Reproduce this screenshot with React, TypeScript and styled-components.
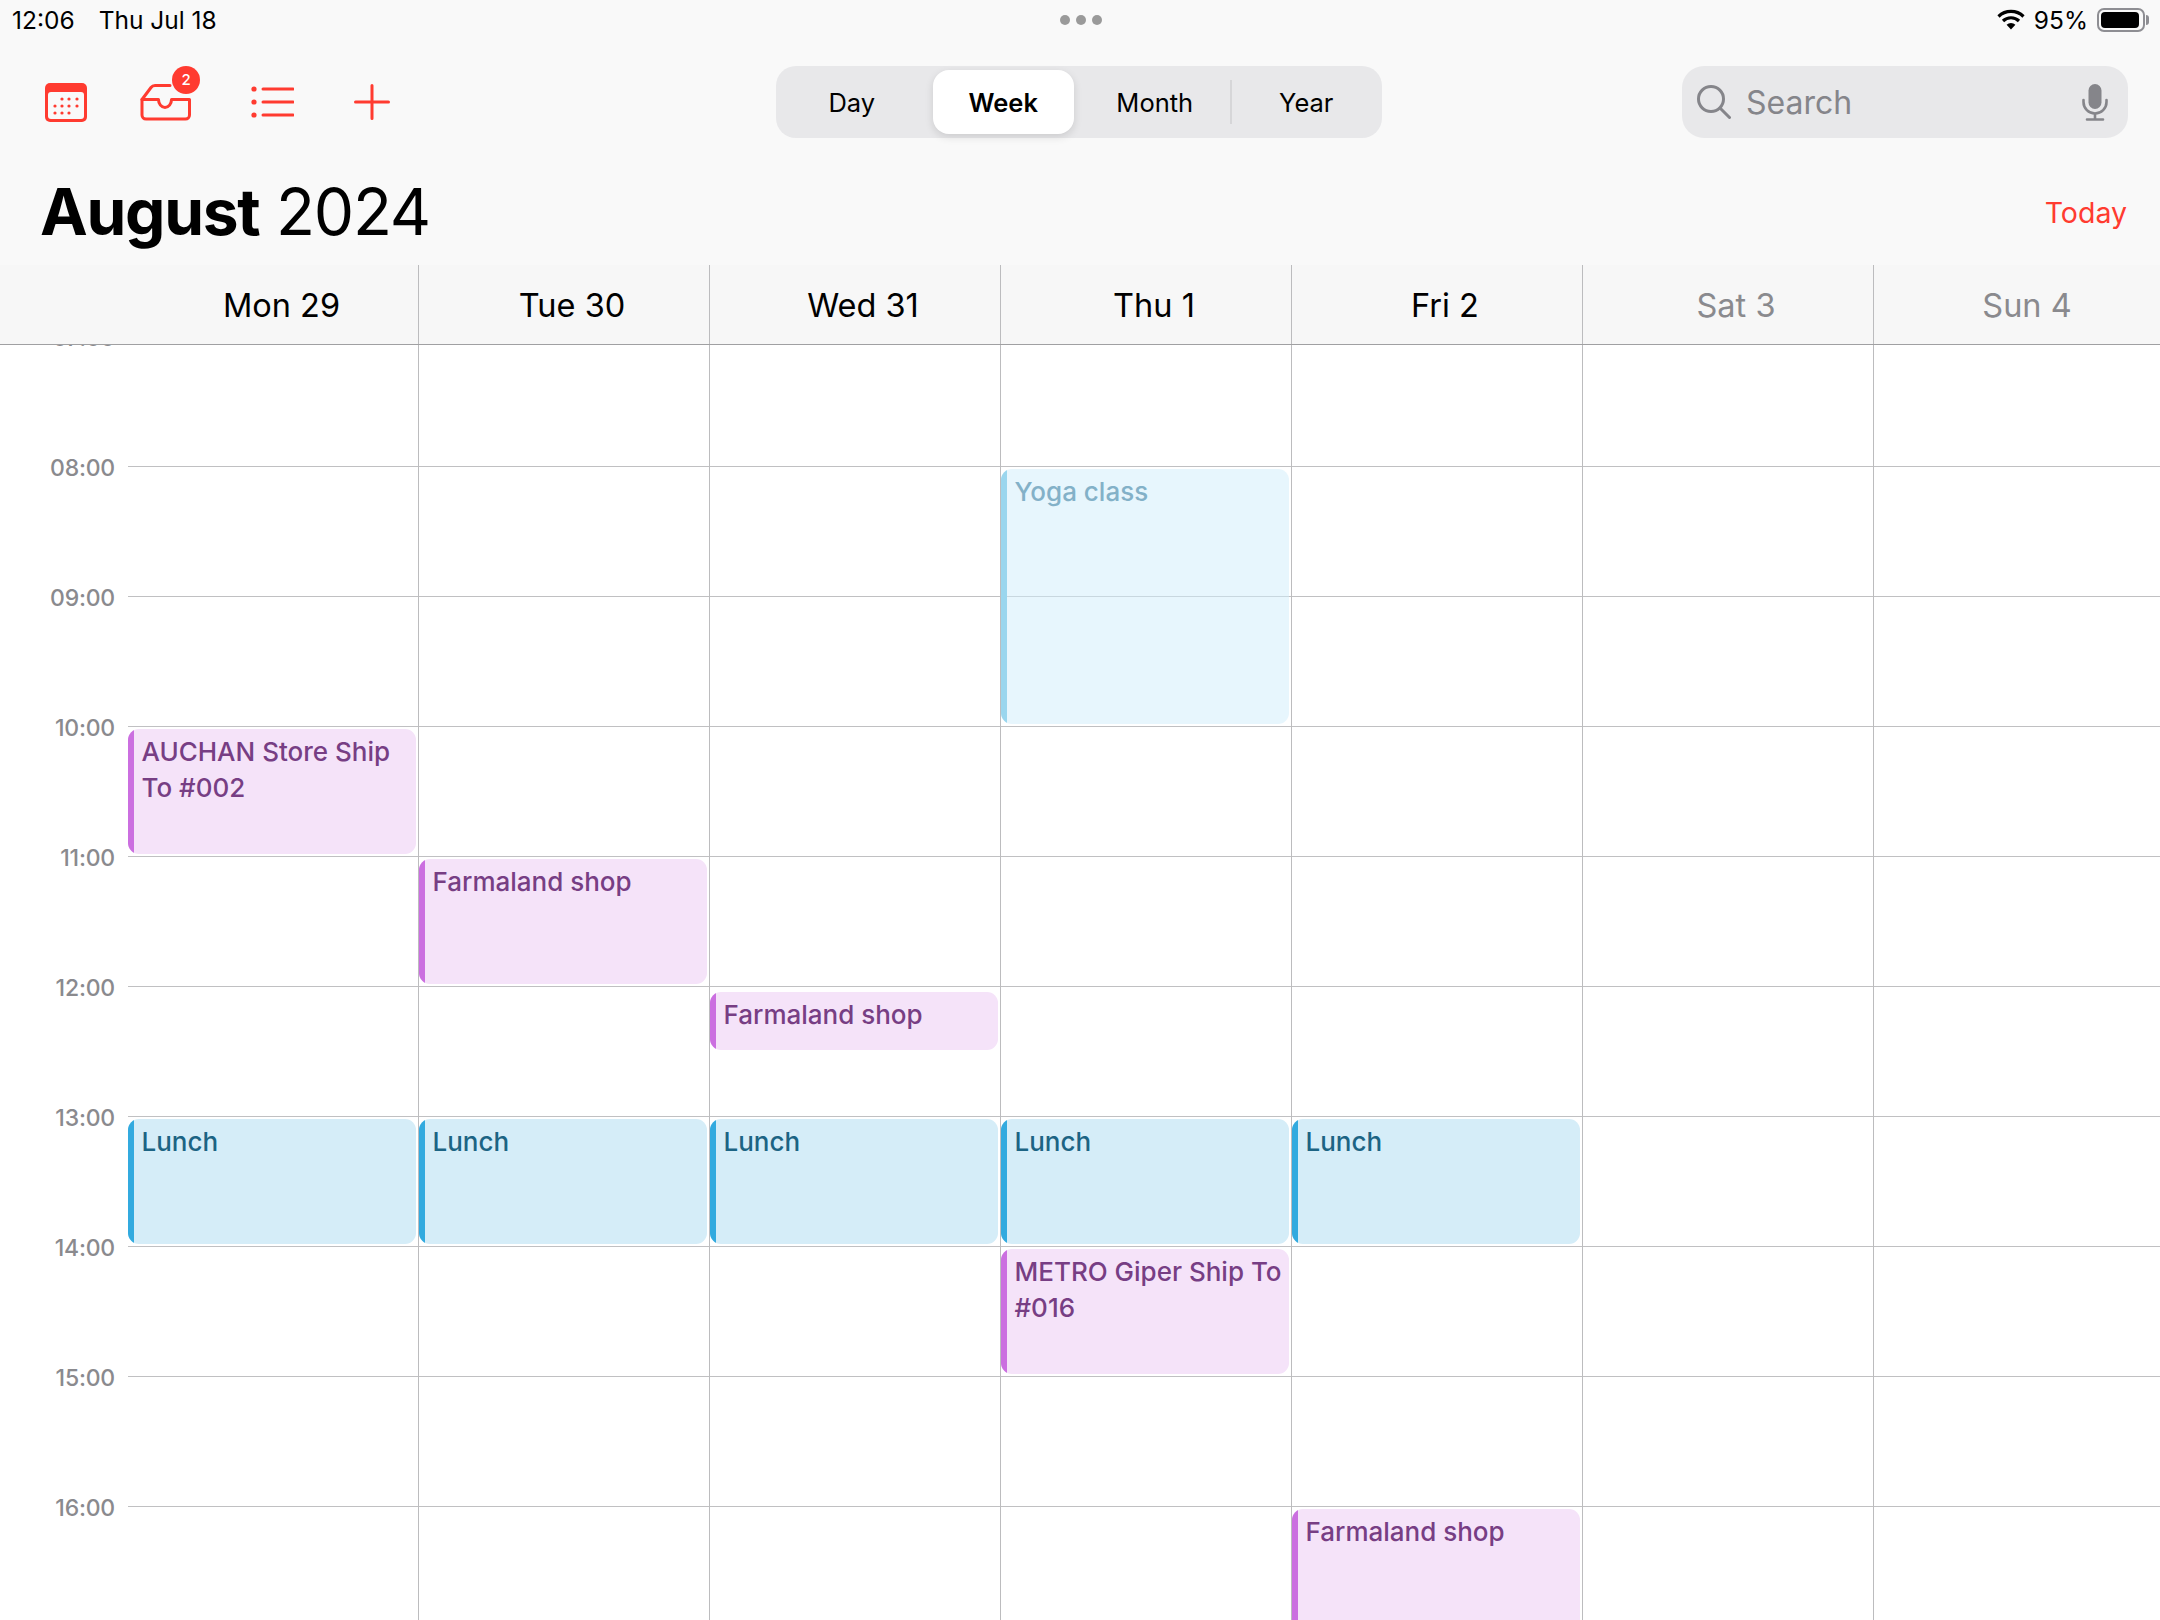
import React from "react";
import styled, { createGlobalStyle } from "styled-components";

const RED = "#ff3b30";
const HOUR = 130;
const FIRST_HOUR = 7;
const COLUMN = 291;

const Global = createGlobalStyle`
  html, body { margin: 0; padding: 0; background: #fff; }
  * { box-sizing: border-box; }
  body { font-family: Inter, "Liberation Sans", sans-serif; }
`;

const Page = styled.div`
  width: 2160px;
  height: 1620px;
  display: flex;
  flex-direction: column;
  overflow: hidden;
  background: #fff;
`;

const TopArea = styled.header`
  background: #f9f9f9;
  display: flex;
  flex-direction: column;
  flex: none;
`;

const StatusBar = styled.div`
  height: 38px;
  padding: 1px 10px 0 12px;
  display: grid;
  grid-template-columns: 1fr auto 1fr;
  align-items: center;
  font-size: 24.5px;
  color: #000;
`;

const StatusLeft = styled.div`
  display: flex;
  gap: 24px;
`;

const MoreDots = styled.div`
  display: flex;
  gap: 6px;
`;

const MoreDot = styled.span`
  width: 10px;
  height: 10px;
  border-radius: 50%;
  background: #9a9a9a;
`;

const StatusRight = styled.div`
  display: flex;
  justify-content: flex-end;
  align-items: center;
  gap: 9px;
`;

const Battery = styled.div`
  width: 48px;
  height: 24px;
  border: 2px solid #8e8e93;
  border-radius: 7px;
  padding: 2px;
  margin-right: 5px;
  position: relative;
  &::before {
    content: "";
    display: block;
    height: 100%;
    width: 94%;
    background: #000;
    border-radius: 4px;
  }
  &::after {
    content: "";
    position: absolute;
    right: -6px;
    top: 5px;
    width: 3px;
    height: 10px;
    border-radius: 0 3px 3px 0;
    background: #8e8e93;
  }
`;

const Toolbar = styled.div`
  height: 72px;
  margin-top: 28px;
  padding-right: 32px;
  display: flex;
  align-items: center;
`;

const ToolIcons = styled.div`
  flex: 0 0 776px;
  display: flex;
  align-items: center;
  padding-left: 45px;
`;

const ToolIcon = styled.span<{ $gap: number }>`
  display: flex;
  margin-left: ${(p) => p.$gap}px;
  position: relative;
`;

const Badge = styled.span`
  position: absolute;
  left: 32px;
  top: -18px;
  width: 28px;
  height: 28px;
  border-radius: 50%;
  background: ${RED};
  color: #fff;
  font-size: 15px;
  font-weight: 500;
  display: flex;
  align-items: center;
  justify-content: center;
`;

const Segmented = styled.div`
  flex: 0 0 606px;
  height: 72px;
  padding: 4px 0;
  border-radius: 20px;
  background: #e8e8ea;
  display: grid;
  grid-template-columns: repeat(4, 1fr);
`;

const Segment = styled.div<{ $active?: boolean; $divider?: boolean }>`
  display: flex;
  align-items: center;
  justify-content: center;
  position: relative;
  font-size: 25.5px;
  color: #000;
  font-weight: ${(p) => (p.$active ? 600 : 400)};
  background: ${(p) => (p.$active ? "#fff" : "transparent")};
  border-radius: 16px;
  margin: ${(p) => (p.$active ? "0 5px" : "0")};
  box-shadow: ${(p) => (p.$active ? "0 3px 8px rgba(0,0,0,.12)" : "none")};
  &::before {
    content: "";
    display: ${(p) => (p.$divider ? "block" : "none")};
    position: absolute;
    left: -1px;
    top: 10px;
    bottom: 10px;
    width: 2px;
    background: #d6d6d8;
  }
`;

const SearchBox = styled.div`
  margin-left: auto;
  width: 446px;
  height: 72px;
  border-radius: 22px;
  background: #e8e8ea;
  padding: 0 20px 0 15px;
  display: flex;
  align-items: center;
  font-size: 32px;
  color: #85858a;
`;

const SearchLabel = styled.span`
  margin-left: 15px;
  flex: 1;
`;

const TitleRow = styled.div`
  height: 127px;
  padding: 21px 33px 0 40px;
  display: flex;
  align-items: center;
  justify-content: space-between;
`;

const Title = styled.h1`
  margin: 0 0 1px;
  font-size: 64px;
  font-weight: 400;
  letter-spacing: -1.3px;
  color: #000;
`;

const TitleStrong = styled.strong`
  font-weight: 700;
`;

const TodayLink = styled.span`
  font-size: 28.5px;
  color: ${RED};
`;

const WeekHeader = styled.div`
  height: 80px;
  flex: none;
  background: #f7f7f7;
  border-bottom: 1px solid #a0a0a2;
  display: grid;
  grid-template-columns: repeat(7, ${COLUMN}px);
  padding-left: 127px;
`;

const DayHead = styled.div<{ $muted?: boolean; $first?: boolean }>`
  display: flex;
  align-items: center;
  justify-content: center;
  font-size: 32.5px;
  padding-left: ${(p) => (p.$first ? "18px" : "16px")};
  padding-top: 1px;
  color: ${(p) => (p.$muted ? "#8a8a8e" : "#000")};
  border-left: ${(p) => (p.$first ? "none" : "1px solid #bcbcbe")};
`;

const Scroller = styled.main`
  flex: 1;
  min-height: 0;
  overflow: hidden;
  background: #fff;
`;

const GridBody = styled.div`
  margin-top: -9px;
  display: grid;
  grid-template-columns: 127px repeat(7, ${COLUMN}px);
`;

const TimeColumn = styled.div`
  display: flex;
  flex-direction: column;
`;

const TimeSlot = styled.div`
  height: ${HOUR}px;
  padding-right: 12px;
  text-align: right;
  font-size: 23px;
  line-height: 28px;
  font-weight: 500;
  color: #8a8a8e;
  letter-spacing: -0.2px;
  transform: translateY(-12px);
`;

const DayColumn = styled.div<{ $first?: boolean }>`
  position: relative;
  border-left: 1px solid ${(p) => (p.$first ? "transparent" : "#bcbcbe")};
`;

const HourLine = styled.div`
  height: ${HOUR}px;
  border-top: 1px solid #c0c0c2;
`;

type Tone = "purple" | "blue" | "pale";
const TONES: Record<Tone, { bg: string; bar: string; fg: string }> = {
  purple: { bg: "#f5e3f9", bar: "#cb6fe0", fg: "#773e84" },
  blue: { bg: "#d5edf8", bar: "#32aadf", fg: "#1c6484" },
  pale: { bg: "rgba(208,238,252,.5)", bar: "#9ad6ee", fg: "#83b1c8" },
};

const EventCard = styled.div<{ $tone: Tone; $top: number; $height: number }>`
  position: absolute;
  left: 0;
  right: 2px;
  top: ${(p) => p.$top}px;
  height: ${(p) => p.$height}px;
  padding: 5px 4px 0 13.5px;
  border-radius: 11px;
  background: ${(p) => TONES[p.$tone].bg};
  color: ${(p) => TONES[p.$tone].fg};
  font-size: 26px;
  font-weight: 550;
  line-height: 36px;
  overflow: hidden;
  &::before {
    content: "";
    position: absolute;
    left: 0;
    top: 0;
    bottom: 0;
    width: 6px;
    background: ${(p) => TONES[p.$tone].bar};
  }
`;

const Svg = styled.svg`
  display: block;
  flex: none;
`;

const CalendarIcon = () => (
  <Svg width="42" height="39" viewBox="0 0 42 39">
    <rect x="0" y="0" width="42" height="39" rx="5" fill={RED} />
    <rect x="3" y="9" width="36" height="27" rx="3" fill="#f9f9f9" />
    {[
      [17, 16], [24, 16], [32, 16],
      [10, 23], [17, 23], [24, 23], [32, 23],
      [10, 30], [17, 30], [24, 30],
    ].map(([x, y]) => (
      <circle key={`${x}-${y}`} cx={x} cy={y} r="1.6" fill={RED} />
    ))}
  </Svg>
);

const InboxIcon = () => (
  <Svg width="52" height="37" viewBox="0 0 52 37" fill="none" stroke={RED} strokeWidth="3" strokeLinecap="round" strokeLinejoin="round">
    <path d="M2 15.5 H18.5 a6.5 8 0 0 0 13 0 H49.5 V31 a4 4 0 0 1 -4 4 H6 a4 4 0 0 1 -4 -4 Z" />
    <path d="M2 15.5 L11 3.5 Q12.5 1.5 15 1.5 H30" />
  </Svg>
);

const ListIcon = () => (
  <Svg width="43" height="32" viewBox="0 0 43 32" fill="none" stroke={RED} strokeWidth="3" strokeLinecap="round">
    {[3, 16, 29].map((y) => (
      <React.Fragment key={y}>
        <circle cx="3" cy={y} r="2.6" fill={RED} stroke="none" />
        <path d={`M12 ${y} H42`} />
      </React.Fragment>
    ))}
  </Svg>
);

const PlusIcon = () => (
  <Svg width="36" height="36" viewBox="0 0 36 36" fill="none" stroke={RED} strokeWidth="3" strokeLinecap="round">
    <path d="M18 1.5 V34.5 M1.5 18 H34.5" />
  </Svg>
);

const WifiIcon = () => (
  <Svg width="28" height="21" viewBox="0 0 28 21" fill="none" stroke="#000" strokeWidth="3.2">
    <path d="M1.5 7.5 A18 18 0 0 1 26.5 7.5" />
    <path d="M6 12 A11.5 11.5 0 0 1 22 12" />
    <path d="M14 20.5 L9.6 15.8 A6.4 6.4 0 0 1 18.4 15.8 Z" fill="#000" stroke="none" />
  </Svg>
);

const SearchIcon = () => (
  <Svg width="34" height="34" viewBox="0 0 34 34" fill="none" stroke="#85858a" strokeWidth="3" strokeLinecap="round">
    <circle cx="14" cy="14" r="12.5" />
    <path d="M23.5 23.5 L32.5 32.5" />
  </Svg>
);

const MicIcon = () => (
  <Svg width="26" height="37" viewBox="0 0 26 37" fill="none" stroke="#85858a" strokeWidth="2.6" strokeLinecap="round">
    <rect x="6.5" y="0" width="13" height="25" rx="6.5" fill="#85858a" stroke="none" />
    <path d="M1.5 16 V18 a11.5 11.5 0 0 0 23 0 V16" />
    <path d="M13 30 V35.5 M5 35.5 H21" />
  </Svg>
);

const HOURS = [7, 8, 9, 10, 11, 12, 13, 14, 15, 16];
const pad = (h: number) => `${String(h).padStart(2, "0")}:00`;

const DAYS = [
  { label: "Mon 29" },
  { label: "Tue 30" },
  { label: "Wed 31" },
  { label: "Thu 1" },
  { label: "Fri 2" },
  { label: "Sat 3", muted: true },
  { label: "Sun 4", muted: true },
];

type Ev = { day: number; title: string; tone: Tone; start: number; px: number };
const EVENTS: Ev[] = [
  { day: 3, title: "Yoga class", tone: "pale", start: 8, px: 255 },
  { day: 0, title: "AUCHAN Store Ship To #002", tone: "purple", start: 10, px: 125 },
  { day: 1, title: "Farmaland shop", tone: "purple", start: 11, px: 125 },
  { day: 2, title: "Farmaland shop", tone: "purple", start: 12 + 3 / 130, px: 58 },
  { day: 0, title: "Lunch", tone: "blue", start: 13, px: 125 },
  { day: 1, title: "Lunch", tone: "blue", start: 13, px: 125 },
  { day: 2, title: "Lunch", tone: "blue", start: 13, px: 125 },
  { day: 3, title: "Lunch", tone: "blue", start: 13, px: 125 },
  { day: 4, title: "Lunch", tone: "blue", start: 13, px: 125 },
  { day: 3, title: "METRO Giper Ship To #016", tone: "purple", start: 14, px: 125 },
  { day: 4, title: "Farmaland shop", tone: "purple", start: 16, px: 125 },
];

export default function App() {
  return (
    <Page>
      <Global />
      <TopArea>
        <StatusBar>
          <StatusLeft>
            <span>12:06</span>
            <span>Thu Jul 18</span>
          </StatusLeft>
          <MoreDots>
            <MoreDot />
            <MoreDot />
            <MoreDot />
          </MoreDots>
          <StatusRight>
            <WifiIcon />
            <span>95%</span>
            <Battery />
          </StatusRight>
        </StatusBar>

        <Toolbar>
          <ToolIcons>
            <ToolIcon $gap={0}><CalendarIcon /></ToolIcon>
            <ToolIcon $gap={53}>
              <InboxIcon />
              <Badge>2</Badge>
            </ToolIcon>
            <ToolIcon $gap={59}><ListIcon /></ToolIcon>
            <ToolIcon $gap={60}><PlusIcon /></ToolIcon>
          </ToolIcons>
          <Segmented>
            <Segment>Day</Segment>
            <Segment $active>Week</Segment>
            <Segment>Month</Segment>
            <Segment $divider>Year</Segment>
          </Segmented>
          <SearchBox>
            <SearchIcon />
            <SearchLabel>Search</SearchLabel>
            <MicIcon />
          </SearchBox>
        </Toolbar>

        <TitleRow>
          <Title>
            <TitleStrong>August</TitleStrong> 2024
          </Title>
          <TodayLink>Today</TodayLink>
        </TitleRow>
      </TopArea>

      <WeekHeader>
        {DAYS.map((d, i) => (
          <DayHead key={d.label} $muted={d.muted} $first={i === 0}>
            {d.label}
          </DayHead>
        ))}
      </WeekHeader>

      <Scroller>
        <GridBody>
          <TimeColumn>
            {HOURS.map((h) => (
              <TimeSlot key={h}>{pad(h)}</TimeSlot>
            ))}
          </TimeColumn>
          {DAYS.map((d, i) => (
            <DayColumn key={d.label} $first={i === 0}>
              {HOURS.map((h) => (
                <HourLine key={h} />
              ))}
              {EVENTS.filter((e) => e.day === i).map((e) => (
                <EventCard
                  key={e.title + e.start}
                  $tone={e.tone}
                  $top={(e.start - FIRST_HOUR) * HOUR + 3}
                  $height={e.px}
                >
                  {e.title}
                </EventCard>
              ))}
            </DayColumn>
          ))}
        </GridBody>
      </Scroller>
    </Page>
  );
}
